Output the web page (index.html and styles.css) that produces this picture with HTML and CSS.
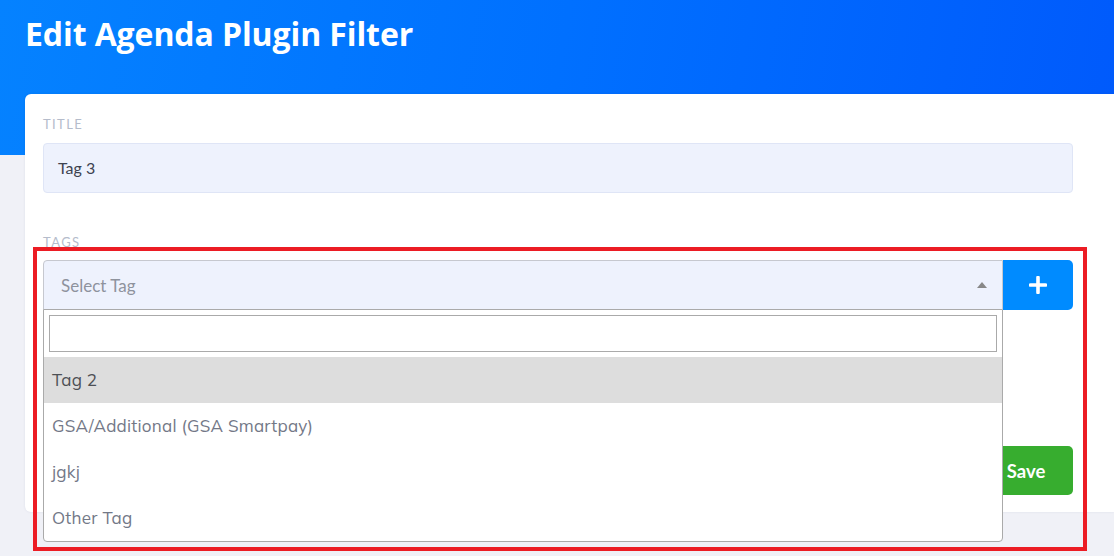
FILE: index.html
```html
<!DOCTYPE html>
<html>
<head>
<meta charset="utf-8">
<title>Edit Agenda Plugin Filter</title>
<link rel="stylesheet" href="styles.css">
</head>
<body>
<div class="hero">
  <h1>Edit Agenda Plugin Filter</h1>
</div>

<div class="card">
  <div class="field">
    <label class="field-label">Title</label>
    <div class="text-input">Tag 3</div>
  </div>

  <div class="field tags-field">
    <label class="field-label">Tags</label>
    <div class="tag-row">
      <div class="select">
        <span class="select-placeholder">Select Tag</span>
        <span class="select-arrow"></span>
      </div>
      <button class="add-btn" type="button">
        <svg width="18" height="18" viewBox="0 0 18 18"><path d="M9 1.5v15M1.5 9h15" stroke="#fff" stroke-width="3.6" stroke-linecap="round"/></svg>
      </button>

      <div class="dropdown">
        <div class="dropdown-search"></div>
        <ul class="options">
          <li class="option is-active">Tag 2</li>
          <li class="option">GSA/Additional (GSA Smartpay)</li>
          <li class="option">jgkj</li>
          <li class="option">Other Tag</li>
        </ul>
      </div>
    </div>
  </div>

  <div class="actions">
    <button class="save-btn" type="button">Save</button>
  </div>
</div>

<div class="highlight"></div>
</body>
</html>
```

FILE: styles.css
```css
body {
  margin: 0;
  background: #f0f1f7;
  font-family: "Source Sans Pro", "Lato", "Noto Sans", sans-serif;
  position: relative;
  min-height: 556px;
  overflow: hidden;
}

.hero {
  height: 155px;
  padding: 0 25px;
  box-sizing: border-box;
  background: linear-gradient(100deg, #0582ff 0%, #0070ff 50%, #005afc 100%);
}

.hero h1 {
  margin: 0;
  padding-top: 13px;
  color: #fff;
  font-family: "Open Sans", sans-serif;
  font-size: 32px;
  font-weight: 700;
  line-height: 42px;
  letter-spacing: -0.1px;
}

.card {
  margin: -61px 0 0 25px;
  padding: 22px 41px 17px 18px;
  background: #fff;
  border-radius: 6px 0 0 6px;
  box-shadow: 0 0 3px rgba(30, 40, 90, 0.08);
}

.field-label {
  display: block;
  font-size: 13px;
  line-height: 16px;
  letter-spacing: 1.4px;
  text-transform: uppercase;
  color: #b5bccb;
  margin-bottom: 11px;
}

.text-input {
  height: 48px;
  line-height: 48px;
  padding: 0 14px;
  background: #eef2fd;
  border: 1px solid #dfe5f6;
  border-radius: 4px;
  font-size: 16px;
  color: #3d4350;
}

.tags-field {
  margin-top: 41px;
}

.tags-field .field-label {
  margin-bottom: 10px;
}

.tag-row {
  display: flex;
  position: relative;
}

.select {
  flex: 1;
  height: 48px;
  display: flex;
  align-items: center;
  justify-content: space-between;
  padding: 0 14px 0 17px;
  background: #eef2fd;
  border: 1px solid #c6c8cf;
  border-radius: 4px 0 0 0;
}

.select-placeholder {
  font-size: 17px;
  color: #8e939d;
}

.select-arrow {
  width: 0;
  height: 0;
  border-left: 5px solid transparent;
  border-right: 5px solid transparent;
  border-bottom: 6px solid #888;
  margin-right: 1px;
}

.add-btn {
  width: 70px;
  height: 50px;
  border: 0;
  padding: 0;
  background: #008bff;
  border-radius: 0 5px 5px 0;
  display: flex;
  align-items: center;
  justify-content: center;
}

.dropdown {
  position: absolute;
  top: 49px;
  left: 0;
  width: 958px;
  background: #fff;
  border: 1px solid #aaa;
  border-radius: 0 0 4px 4px;
  z-index: 2;
}

.dropdown-search {
  height: 35px;
  margin: 5px;
  border: 1px solid #aaa;
}

.options {
  list-style: none;
  margin: 0;
  padding: 0;
  font-family: "Mulish", "Noto Sans", "Open Sans", sans-serif;
}

.option {
  height: 46px;
  line-height: 46px;
  padding-left: 8px;
  font-size: 17px;
  letter-spacing: 0.25px;
  color: #737887;
}

.option.is-active {
  background: #dddddd;
  color: #4d5055;
}

.actions {
  display: flex;
  justify-content: flex-end;
  margin-top: 136px;
}

.save-btn {
  width: 94px;
  height: 49px;
  border: 0;
  border-radius: 5px;
  background: #37ad2f;
  color: #fff;
  font-family: "Source Sans Pro", "Lato", "Noto Sans", sans-serif;
  font-size: 18.5px;
  font-weight: 700;
  padding-left: 6px;
}

.highlight {
  position: absolute;
  left: 33px;
  top: 247px;
  width: 1046px;
  height: 296px;
  border: 4px solid #ec1c24;
  pointer-events: none;
}
```
